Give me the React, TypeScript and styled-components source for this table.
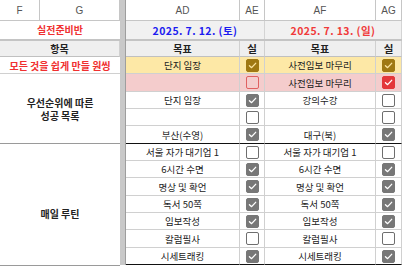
import React from "react";
import styled, { createGlobalStyle, css } from "styled-components";

const GlobalStyle = createGlobalStyle`
  html, body {
    margin: 0;
    padding: 0;
    background: #ffffff;
  }
  body {
    font-family: "Noto Sans CJK KR", "Noto Sans", sans-serif;
    color: #222222;
  }
`;

type Check = "on" | "off" | "goldOn" | "redOff" | "redOn";
type Tone = "plain" | "yellow" | "pink";

interface Row {
  tone: Tone;
  ad: string;
  ae: Check;
  af: string;
  ag: Check;
  strong?: boolean;
}

const rows: Row[] = [
  { tone: "yellow", ad: "단지 임장", ae: "goldOn", af: "사전임보 마무리", ag: "goldOn" },
  { tone: "pink", ad: "", ae: "redOff", af: "사전임보 마무리", ag: "redOn" },
  { tone: "plain", ad: "단지 임장", ae: "on", af: "강의수강", ag: "off" },
  { tone: "plain", ad: "", ae: "off", af: "", ag: "off" },
  { tone: "plain", ad: "부산(수영)", ae: "on", af: "대구(북)", ag: "on", strong: true },
  { tone: "plain", ad: "서울 자가 대기업 1", ae: "off", af: "서울 자가 대기업 1", ag: "off" },
  { tone: "plain", ad: "6시간 수면", ae: "on", af: "6시간 수면", ag: "on" },
  { tone: "plain", ad: "명상 및 확언", ae: "on", af: "명상 및 확언", ag: "on" },
  { tone: "plain", ad: "독서 50쪽", ae: "on", af: "독서 50쪽", ag: "on" },
  { tone: "plain", ad: "임보작성", ae: "on", af: "임보작성", ag: "on" },
  { tone: "plain", ad: "칼럼필사", ae: "off", af: "칼럼필사", ag: "off" },
  { tone: "plain", ad: "시세트래킹", ae: "on", af: "시세트래킹", ag: "on", strong: true },
];

const toneBg: Record<Tone, string> = {
  plain: "#ffffff",
  yellow: "#fde8a6",
  pink: "#f4cccc",
};

const FIRST_DATA_ROW = 5;

const Sheet = styled.div`
  display: grid;
  grid-template-columns: 40px 80px 6px 114px 25px 111px 26px;
  grid-template-rows:
    21px 18px 2px 16px
    17px 18px 17px 17px 18px 17px 17px 18px 17px 17px 18px 17px;
  width: 402px;
  height: 266px;
  overflow: hidden;
  background: #ffffff;
`;

interface PlaceProps {
  $c: number;
  $r: number;
  $cs?: number;
  $rs?: number;
}

const place = css<PlaceProps>`
  grid-column: ${(p) => p.$c} / span ${(p) => p.$cs ?? 1};
  grid-row: ${(p) => p.$r} / span ${(p) => p.$rs ?? 1};
`;

const FrozenCol = styled.div`
  grid-column: 3;
  grid-row: 1 / -1;
  background: #c9c9c9;
  border-right: 1px solid #9e9e9e;
  z-index: 2;
`;

const FrozenRow = styled.div`
  grid-column: 1 / -1;
  grid-row: 3;
  background: #c4c4c4;
  z-index: 1;
`;

const ColHead = styled.div<PlaceProps>`
  ${place};
  display: flex;
  align-items: center;
  justify-content: center;
  box-sizing: border-box;
  border-right: 1px solid #c6c6c6;
  border-bottom: 1px solid #c6c6c6;
  background: #ffffff;
  font-family: "Liberation Sans", Arial, sans-serif;
  font-size: 10px;
  color: #555555;
`;

const DateCell = styled.div<PlaceProps & { $color: string; $bg: string }>`
  ${place};
  display: flex;
  align-items: center;
  justify-content: center;
  box-sizing: border-box;
  border-right: 1px solid #d4d4d4;
  background: ${(p) => p.$bg};
  color: ${(p) => p.$color};
  font-size: 10.5px;
  font-weight: 700;
  letter-spacing: 0.4px;
  white-space: pre;
`;

const Cell = styled.div<PlaceProps & { $bg?: string; $strong?: boolean }>`
  ${place};
  display: flex;
  align-items: center;
  justify-content: center;
  box-sizing: border-box;
  border-right: 1px solid #d0d0d0;
  border-bottom: 1px solid ${(p) => (p.$strong ? "#111111" : "#d0d0d0")};
  background: ${(p) => p.$bg ?? "#ffffff"};
  font-size: 9.5px;
  white-space: nowrap;
  overflow: hidden;
`;

const HeadCell = styled(Cell)`
  background: #efefef;
  font-weight: 700;
  font-size: 10px;
  border-bottom-color: #c0c0c0;
`;

const NarrowHead = styled(HeadCell)`
  align-items: flex-start;
  padding: 1px 6px 0;
  white-space: normal;
  word-break: break-all;
  line-height: 13px;
  font-size: 10.5px;
  text-align: center;
`;

const Label = styled.div<PlaceProps & { $red?: boolean; $line?: string }>`
  ${place};
  display: flex;
  align-items: center;
  justify-content: center;
  box-sizing: border-box;
  text-align: center;
  border-bottom: 1px solid ${(p) => p.$line ?? "#d0d0d0"};
  background: #ffffff;
  color: ${(p) => (p.$red ? "#f03030" : "#222222")};
  font-size: 10px;
  font-weight: 700;
  line-height: 13px;
  white-space: pre;
  overflow: hidden;
`;

const boxStyles: Record<Check, { bg: string; border: string; tick: string }> = {
  on: { bg: "#777777", border: "#777777", tick: "#ffffff" },
  off: { bg: "#ffffff", border: "#6e6e6e", tick: "none" },
  goldOn: { bg: "#9f7813", border: "#9f7813", tick: "#fbe4a2" },
  redOff: { bg: "transparent", border: "#e06060", tick: "none" },
  redOn: { bg: "#e3373a", border: "#e3373a", tick: "#ffffff" },
};

const Box = styled.span<{ $kind: Check }>`
  display: flex;
  align-items: center;
  justify-content: center;
  width: 13px;
  height: 13px;
  box-sizing: border-box;
  border-radius: 2px;
  border: 1.5px solid ${(p) => boxStyles[p.$kind].border};
  background: ${(p) => boxStyles[p.$kind].bg};
`;

const CheckBox: React.FC<{ kind: Check }> = ({ kind }) => {
  const tick = boxStyles[kind].tick;
  return (
    <Box $kind={kind}>
      {tick !== "none" && (
        <svg width="9" height="9" viewBox="0 0 10 10">
          <path
            d="M1.6 5.2 L4 7.4 L8.5 2.6"
            fill="none"
            stroke={tick}
            strokeWidth="1.5"
            strokeLinecap="round"
            strokeLinejoin="round"
          />
        </svg>
      )}
    </Box>
  );
};

const App: React.FC = () => {
  return (
    <>
      <GlobalStyle />
      <Sheet>
        <ColHead $c={1} $r={1}>F</ColHead>
        <ColHead $c={2} $r={1}>G</ColHead>
        <ColHead $c={4} $r={1}>AD</ColHead>
        <ColHead $c={5} $r={1}>AE</ColHead>
        <ColHead $c={6} $r={1}>AF</ColHead>
        <ColHead $c={7} $r={1}>AG</ColHead>

        <Label $c={1} $r={2} $cs={2} $red $line="transparent">
          실전준비반
        </Label>
        <DateCell $c={4} $r={2} $cs={2} $color="#1c1cf0" $bg="#f1f1f1">
          2025. 7. 12. (토)
        </DateCell>
        <DateCell $c={6} $r={2} $cs={2} $color="#f03a3a" $bg="#f1f1f1">
          2025. 7. 13. (일)
        </DateCell>

        <FrozenRow />
        <FrozenCol />

        <HeadCell $c={1} $r={4} $cs={2}>항목</HeadCell>
        <HeadCell $c={4} $r={4}>목표</HeadCell>
        <NarrowHead $c={5} $r={4}>실행</NarrowHead>
        <HeadCell $c={6} $r={4}>목표</HeadCell>
        <NarrowHead $c={7} $r={4}>실행</NarrowHead>

        <Label $c={1} $r={5} $cs={2} $red>
          모든 것을 쉽게 만들 원씽
        </Label>
        <Label $c={1} $r={6} $cs={2} $rs={4} $line="#9a9a9a">
          {"우선순위에 따른\n성공 목록"}
        </Label>
        <Label $c={1} $r={11} $cs={2} $rs={7} $line="#9a9a9a">
          매일 루틴
        </Label>

        {rows.map((row, i) => {
          const r = FIRST_DATA_ROW + i;
          const bg = toneBg[row.tone];
          return (
            <React.Fragment key={r}>
              <Cell $c={4} $r={r} $bg={bg} $strong={row.strong}>
                {row.ad}
              </Cell>
              <Cell $c={5} $r={r} $bg={bg} $strong={row.strong}>
                <CheckBox kind={row.ae} />
              </Cell>
              <Cell $c={6} $r={r} $bg={bg} $strong={row.strong}>
                {row.af}
              </Cell>
              <Cell $c={7} $r={r} $bg={bg} $strong={row.strong}>
                <CheckBox kind={row.ag} />
              </Cell>
            </React.Fragment>
          );
        })}
      </Sheet>
    </>
  );
};

export default App;
